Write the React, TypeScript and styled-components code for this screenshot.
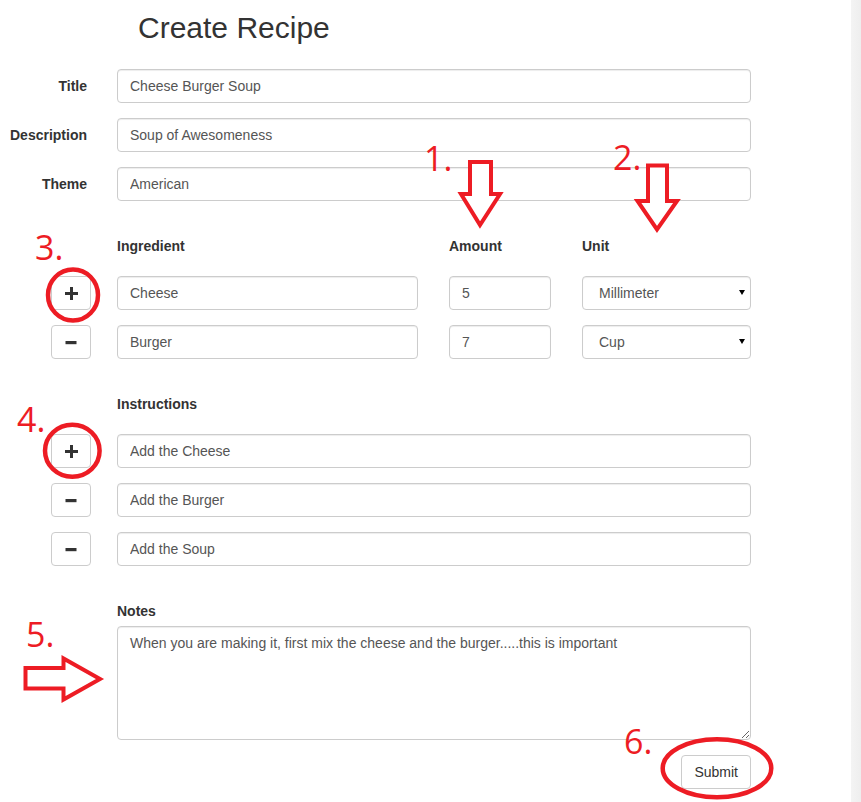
import React from "react";
import styled, { createGlobalStyle } from "styled-components";

const GlobalStyle = createGlobalStyle`
  html, body {
    margin: 0;
    padding: 0;
    background: #fff;
  }
  body {
    font-family: "Liberation Sans", Arial, Helvetica, sans-serif;
    font-size: 14px;
    line-height: 20px;
    color: #333;
  }
  *, *::before, *::after { box-sizing: border-box; }
`;

const RED = "#ed1c24";

const Page = styled.div`
  position: relative;
  display: flex;
  min-height: 100vh;
`;

const Main = styled.main`
  flex: 1;
`;

const Gutter = styled.div`
  width: 10px;
  background: linear-gradient(to right, #f4f4f4, #eeeeee);
`;

const Heading = styled.h1`
  margin: 11px 0 25px 138px;
  font-size: 30px;
  line-height: 33px;
  font-weight: 400;
  color: #333;
`;

const Form = styled.form`
  display: flex;
  flex-direction: column;
`;

const Stack = styled.div<{ $top?: number }>`
  display: flex;
  flex-direction: column;
  gap: 15px;
  margin-top: ${(p) => p.$top ?? 0}px;
`;

const Row = styled.div`
  display: grid;
  grid-template-columns: 102px 634px;
  column-gap: 15px;
  align-items: center;
`;

const HeaderRow = styled(Row)`
  margin-bottom: 5px;
  height: 20px;
`;

const SideLabel = styled.label`
  text-align: right;
  padding-right: 15px;
  font-weight: 700;
  color: #333;
`;

const ColLabel = styled.span`
  font-weight: 700;
  color: #333;
`;

const TripleGrid = styled.div`
  display: grid;
  grid-template-columns: 301px 102px 169px;
  column-gap: 31px;
  align-items: center;
`;

const ButtonCell = styled.div`
  display: flex;
  padding-left: 51px;
`;

const Control = styled.input`
  display: block;
  width: 100%;
  height: 34px;
  padding: 6px 12px;
  font-family: inherit;
  font-size: 14px;
  line-height: 20px;
  color: #555;
  background: #fff;
  border: 1px solid #ccc;
  border-radius: 4px;
  box-shadow: inset 0 1px 1px rgba(0, 0, 0, 0.075);
  outline: none;
`;

const SelectWrap = styled.div`
  position: relative;
`;

const Select = styled.select`
  display: block;
  width: 100%;
  height: 34px;
  padding: 6px 24px 6px 16px;
  font-family: inherit;
  font-size: 14px;
  color: #555;
  background: #fff;
  border: 1px solid #ccc;
  border-radius: 4px;
  box-shadow: inset 0 1px 1px rgba(0, 0, 0, 0.075);
  appearance: none;
  -webkit-appearance: none;
  outline: none;
`;

const Caret = styled.span`
  position: absolute;
  right: 6px;
  top: 14px;
  width: 0;
  height: 0;
  border-left: 3.5px solid transparent;
  border-right: 3.5px solid transparent;
  border-top: 5px solid #000;
  pointer-events: none;
`;

const IconButton = styled.button`
  display: flex;
  align-items: center;
  justify-content: center;
  width: 40px;
  height: 34px;
  padding: 0;
  background: #fff;
  border: 1px solid #ccc;
  border-radius: 4px;
  color: #333;
  cursor: pointer;
`;

const NotesBlock = styled.div`
  display: grid;
  grid-template-columns: 102px 634px;
  column-gap: 15px;
  margin-top: 35px;
`;

const NotesInner = styled.div`
  grid-column: 2;
  display: flex;
  flex-direction: column;
  gap: 5px;
`;

const TextArea = styled.textarea`
  display: block;
  width: 100%;
  height: 114px;
  padding: 6px 12px;
  font-family: inherit;
  font-size: 14px;
  line-height: 20px;
  color: #555;
  background: #fff;
  border: 1px solid #ccc;
  border-radius: 4px;
  box-shadow: inset 0 1px 1px rgba(0, 0, 0, 0.075);
  outline: none;
`;

const SubmitRow = styled.div`
  display: flex;
  justify-content: flex-end;
  width: 751px;
  margin-top: 15px;
  padding-bottom: 13px;
`;

const SubmitButton = styled.button`
  height: 34px;
  padding: 6px 12px;
  font-family: inherit;
  font-size: 14px;
  line-height: 20px;
  color: #333;
  background: #fff;
  border: 1px solid #ccc;
  border-radius: 4px;
  cursor: pointer;
`;

const Overlay = styled.svg`
  position: absolute;
  left: 0;
  top: 0;
  pointer-events: none;
  overflow: visible;
`;

const Note = styled.text`
  font-family: "Open Sans", "DejaVu Sans", sans-serif;
  font-size: 34px;
  fill: ${RED};
`;

const PlusIcon = () => (
  <svg width="13" height="13" viewBox="0 0 13 13" aria-hidden="true">
    <path d="M5 0h3v5h5v3H8v5H5V8H0V5h5z" fill="#333" />
  </svg>
);

const MinusIcon = () => (
  <svg width="12" height="13" viewBox="0 0 12 13" aria-hidden="true">
    <rect x="0.5" y="5" width="11" height="3.2" fill="#333" />
  </svg>
);

const ingredients = [
  { name: "Cheese", amount: "5", unit: "Millimeter" },
  { name: "Burger", amount: "7", unit: "Cup" },
];

const instructions = ["Add the Cheese", "Add the Burger", "Add the Soup"];

const units = ["Millimeter", "Cup", "Teaspoon", "Tablespoon", "Gram"];

export default function App() {
  return (
    <>
      <GlobalStyle />
      <Page>
        <Main>
          <Heading>Create Recipe</Heading>
          <Form onSubmit={(e) => e.preventDefault()}>
            <Stack>
              <Row>
                <SideLabel>Title</SideLabel>
                <Control defaultValue="Cheese Burger Soup" />
              </Row>
              <Row>
                <SideLabel>Description</SideLabel>
                <Control defaultValue="Soup of Awesomeness" />
              </Row>
              <Row>
                <SideLabel>Theme</SideLabel>
                <Control defaultValue="American" />
              </Row>
            </Stack>

            <Stack $top={35}>
              <HeaderRow>
                <span />
                <TripleGrid>
                  <ColLabel>Ingredient</ColLabel>
                  <ColLabel>Amount</ColLabel>
                  <ColLabel>Unit</ColLabel>
                </TripleGrid>
              </HeaderRow>
              {ingredients.map((ing, i) => (
                <Row key={ing.name}>
                  <ButtonCell>
                    <IconButton type="button">{i === 0 ? <PlusIcon /> : <MinusIcon />}</IconButton>
                  </ButtonCell>
                  <TripleGrid>
                    <Control defaultValue={ing.name} />
                    <Control defaultValue={ing.amount} />
                    <SelectWrap>
                      <Select defaultValue={ing.unit}>
                        {units.map((u) => (
                          <option key={u}>{u}</option>
                        ))}
                      </Select>
                      <Caret />
                    </SelectWrap>
                  </TripleGrid>
                </Row>
              ))}
            </Stack>

            <Stack $top={35}>
              <HeaderRow>
                <span />
                <ColLabel>Instructions</ColLabel>
              </HeaderRow>
              {instructions.map((text, i) => (
                <Row key={text}>
                  <ButtonCell>
                    <IconButton type="button">{i === 0 ? <PlusIcon /> : <MinusIcon />}</IconButton>
                  </ButtonCell>
                  <Control defaultValue={text} />
                </Row>
              ))}
            </Stack>

            <NotesBlock>
              <NotesInner>
                <ColLabel>Notes</ColLabel>
                <TextArea defaultValue="When you are making it, first mix the cheese and the burger.....this is important" />
              </NotesInner>
            </NotesBlock>

            <SubmitRow>
              <SubmitButton type="submit">Submit</SubmitButton>
            </SubmitRow>
          </Form>
        </Main>
        <Gutter />

        <Overlay width="861" height="802" viewBox="0 0 861 802">
          <g fill="#fff" stroke={RED} strokeWidth="4" strokeLinejoin="miter">
            <polygon points="470,162 491,162 491,194 500,194 480,225 461,194 470,194" />
            <polygon points="648,165.5 667,165.5 667,201 677,201 657,229.5 637.5,201 648,201" />
            <polygon points="25.5,668 63.5,668 63.5,658.5 100,679 63.5,699.5 63.5,688.5 25.5,688.5" />
          </g>
          <g fill="none" stroke={RED} strokeWidth="4.5">
            <ellipse cx="73" cy="295" rx="25" ry="25.5" />
            <ellipse cx="72.3" cy="450.7" rx="27.3" ry="26" />
            <ellipse cx="717" cy="768.3" rx="54.3" ry="29" />
          </g>
          <Note x="424" y="171">1.</Note>
          <Note x="613" y="170">2.</Note>
          <Note x="35" y="260">3.</Note>
          <Note x="17" y="432">4.</Note>
          <Note x="26" y="647">5.</Note>
          <Note x="624" y="754">6.</Note>
        </Overlay>
      </Page>
    </>
  );
}
